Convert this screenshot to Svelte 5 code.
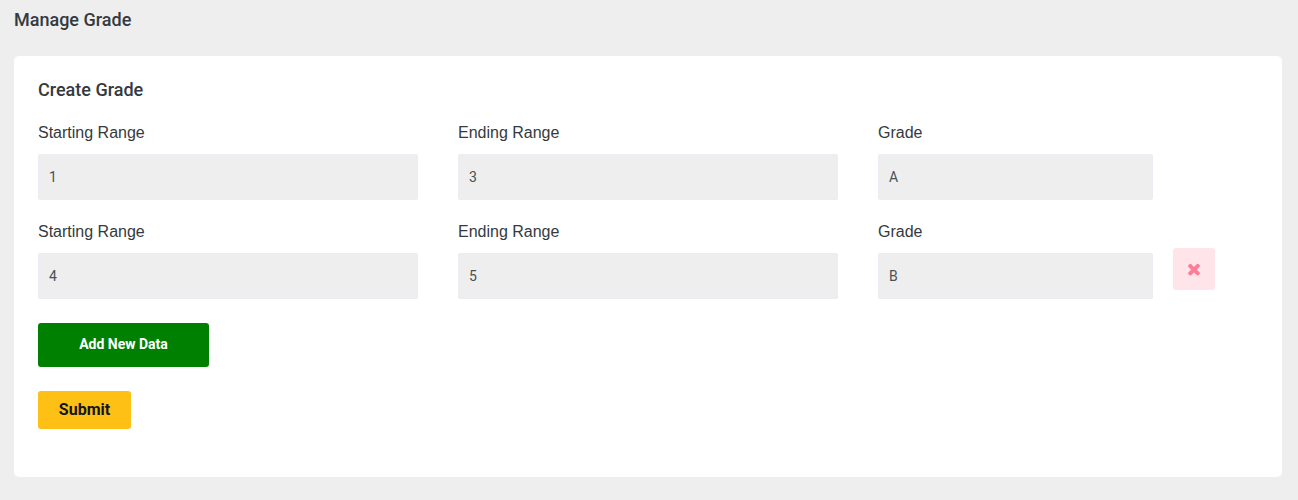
<script>
  let rows = $state([
    { start: '1', end: '3', grade: 'A' },
    { start: '4', end: '5', grade: 'B' }
  ]);
  const add = () => rows.push({ start: '', end: '', grade: '' });
  const remove = (i) => rows.splice(i, 1);
</script>

<main>
  <h1>Manage Grade</h1>
  <section class="card">
    <h2>Create Grade</h2>
    {#each rows as row, i}
      <div class="row">
        <label><span>Starting Range</span><input bind:value={row.start} /></label>
        <label><span>Ending Range</span><input bind:value={row.end} /></label>
        <label><span>Grade</span><input bind:value={row.grade} /></label>
        {#if i > 0}
          <button class="remove" aria-label="Remove" onclick={() => remove(i)}>
            <svg width="18" height="18" viewBox="0 0 1792 1792"><path fill="currentColor" d="M1490 1322q0 40-28 68l-136 136q-28 28-68 28t-68-28l-294-294-294 294q-28 28-68 28t-68-28l-136-136q-28-28-28-68t28-68l294-294-294-294q-28-28-28-68t28-68l136-136q28-28 68-28t68 28l294 294 294-294q28-28 68-28t68 28l136 136q28 28 28 68t-28 68l-294 294 294 294q28 28 28 68z" /></svg>
          </button>
        {/if}
      </div>
    {/each}
    <button class="add" onclick={add}>Add New Data</button>
    <button class="submit">Submit</button>
  </section>
</main>

<style>
  :global(body) { background: #eee; }
  * { box-sizing: border-box; }
  main { padding: 9px 16px 23px 14px; font-family: Roboto, sans-serif; color: #343a40; }
  h1, h2 { margin: 0; font-size: 18px; line-height: 22px; font-weight: 500; }
  .card { margin-top: 25px; height: 421px; padding: 23px 24px; background: #fff; border-radius: 5px; }
  .row { display: grid; grid-template-columns: 420px 420px 295px 42px; margin-top: 20px; }
  label { display: block; padding-right: 40px; }
  label:nth-child(3) { padding-right: 20px; }
  span { display: block; font: 16px/24px "Liberation Sans", Arial, sans-serif; color: #343a40; }
  input { display: block; width: 100%; height: 46px; margin-top: 9px; padding: 0 10px; border: 1px solid #ebedf2; border-radius: 2px; background: #eee; font: 14px Roboto, sans-serif; color: #495057; outline: 0; }
  button { display: flex; align-items: center; justify-content: center; border: 0; padding: 0; border-radius: 3px; font-family: Roboto, sans-serif; }
  .remove { width: 42px; height: 42px; margin-top: 28px; background: #ffe5ea; color: #ff7c97; }
  .add { width: 171px; height: 44px; margin-top: 24px; padding-bottom: 2px; background: green; color: #fff; font-size: 14px; font-weight: 700; }
  .submit { width: 93px; height: 38px; margin-top: 24px; padding-bottom: 2px; background: #ffc015; color: #14141e; font-size: 16px; font-weight: 700; }
</style>
